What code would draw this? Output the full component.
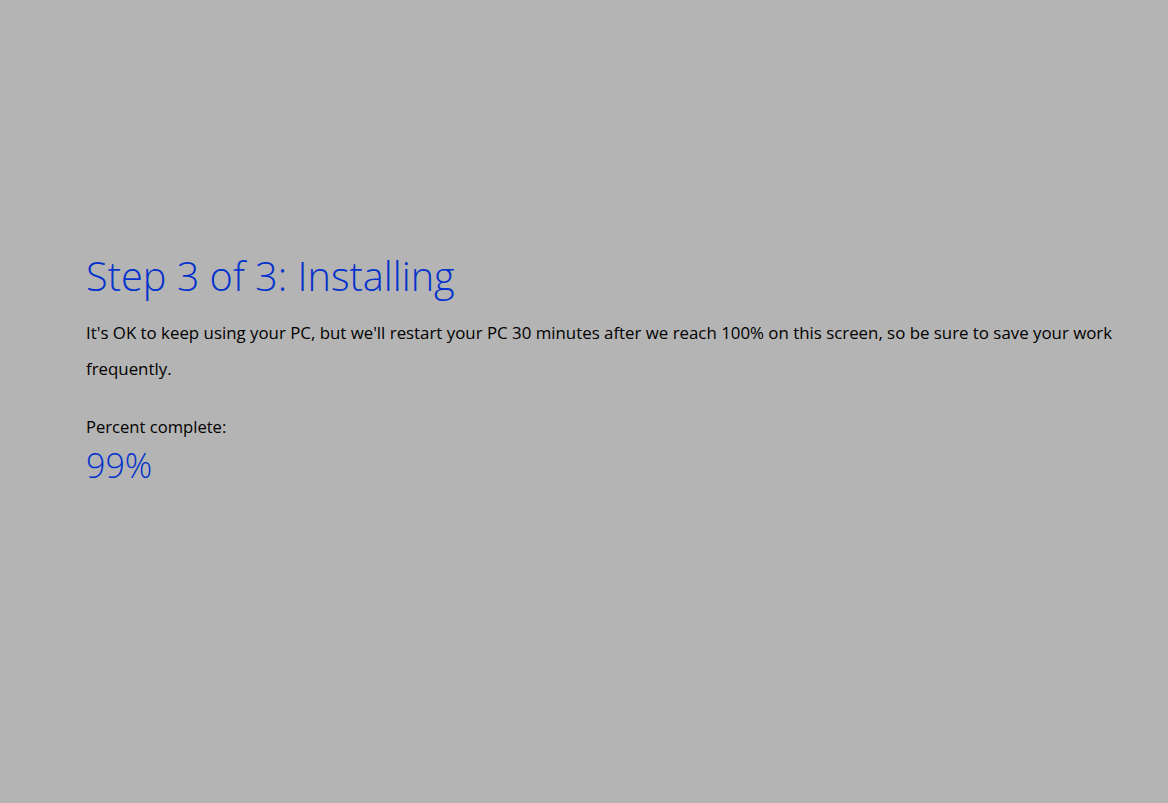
export default function App() {
  return (
    <div
      className="w-full h-[803px] bg-[#b4b4b4] pl-[86px] pt-[249px]"
      style={{ fontFamily: "'Open Sans', 'Noto Sans', sans-serif" }}
    >
      <h1 className="text-[39.7px] font-light leading-[54px] text-[#0432cc]">
        Step 3 of 3: Installing
      </h1>
      <p className="mt-[12px] text-[16.85px] leading-[36px] text-black w-[1060px]">
        It's OK to keep using your PC, but we'll restart your PC 30 minutes after we reach 100% on this screen, so be sure to save your work frequently.
      </p>
      <p className="mt-[28px] text-[16.6px] leading-[24px] text-black">Percent complete:</p>
      <p className="mt-[4px] text-[34px] font-light leading-[44px] text-[#0432cc]">99%</p>
    </div>
  );
}
